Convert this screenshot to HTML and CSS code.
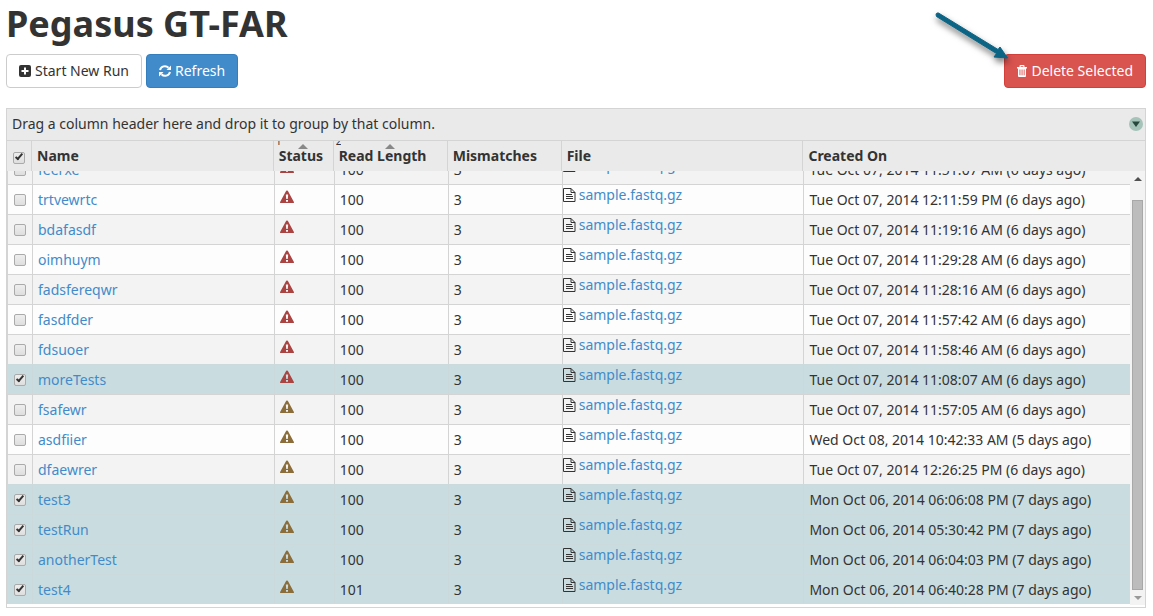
FILE: index.html
```
<!DOCTYPE html>
<html lang="en">
<head>
<meta charset="utf-8">
<title>Pegasus GT-FAR</title>
<link rel="stylesheet" href="styles.css">
</head>
<body>
<svg class="sprite" aria-hidden="true">
  <symbol id="warn" viewBox="0 0 14 14"><path fill="currentColor" fill-rule="evenodd" d="M6.200.8Q7 0 7.800.8L13.900 12q.3 1-.7 1H.8Q-.2 13 .1 12ZM5.900 4.500v1.500l.4 3h1.400l.4-3V4.500ZM6 10v1.800h2V10Z"/></symbol>
  <symbol id="doc" viewBox="0 0 13 14"><path fill="none" stroke="#333" d="M.5.5h7.500l4 4v9H.5ZM8 .5v4h4M3 6.500h6M3 8.500h7M3 10.500h7"/></symbol>
</svg>
<main class="page">
  <h1 class="title">Pegasus GT-FAR</h1>
  <div class="toolbar">
    <button class="btn btn-default" type="button"><svg class="btn-icon" viewBox="0 0 12 12" aria-hidden="true"><rect width="12" height="12" rx="2" fill="currentColor"/><path d="M6 2.500v7M2.500 6h7" stroke="#fff" stroke-width="2"/></svg>Start New Run</button>
    <button class="btn btn-primary" type="button"><svg class="btn-icon" viewBox="0 0 12 12" aria-hidden="true"><path d="M1 5A5 5 0 0 1 9.500 2.800M11 7A5 5 0 0 1 2.500 9.200" fill="none" stroke="currentColor" stroke-width="2"/><path d="M12 .5V5H7.500ZM0 11.500V7h4.500Z" fill="currentColor"/></svg>Refresh</button>
    <button class="btn btn-danger" type="button"><svg class="btn-icon trash" viewBox="0 0 10 12" aria-hidden="true"><path fill="currentColor" fill-rule="evenodd" d="M2.500 2V1Q2.500 0 3.500 0h3q1 0 1 1v1H10v1.500H9V11q0 1-1 1H2q-1 0-1-1V3.500H0V2ZM3.700 2h2.600V1.200H3.700ZM2.500 4.500v5.800h.9V4.500ZM4.600 4.500v5.800h.9V4.500ZM6.700 4.500v5.800h.9V4.500Z"/></svg>Delete Selected</button>
  </div>
  <section class="grid">
    <div class="group-bar"><span>Drag a column header here and drop it to group by that column.</span>
      <button class="menu" type="button" aria-label="Column menu"><svg viewBox="0 0 14 14"><circle cx="7" cy="7" r="7" fill="#a5c3b8"/><path d="M3 4.500h8L7 10Z" fill="#27483f"/></svg></button>
    </div>
    <div class="viewport">
      <table class="runs">
        <thead class="head"><tr class="row head-row">
          <th class="cell pick"><input class="check" type="checkbox" aria-label="Select all" checked></th>
          <th class="cell">Name</th>
          <th class="cell sorted"><span class="order">1</span>Status</th>
          <th class="cell sorted"><span class="order">2</span>Read Length</th>
          <th class="cell">Mismatches</th><th class="cell">File</th><th class="cell">Created On</th>
        </tr></thead>
        <tbody class="body">
          <tr class="row alt"><td class="cell pick"><input class="check" type="checkbox" aria-label="Select feerxe"></td><td class="cell"><a href="#">feerxe</a></td><td class="cell"><svg class="warn failed"><use href="#warn"/></svg></td><td class="cell">100</td><td class="cell">3</td><td class="cell file"><svg class="doc"><use href="#doc"/></svg><a href="#">sample.fastq.gz</a></td><td class="cell">Tue Oct 07, 2014 11:51:07 AM (6 days ago)</td></tr>
          <tr class="row"><td class="cell pick"><input class="check" type="checkbox" aria-label="Select trtvewrtc"></td><td class="cell"><a href="#">trtvewrtc</a></td><td class="cell"><svg class="warn failed"><use href="#warn"/></svg></td><td class="cell">100</td><td class="cell">3</td><td class="cell file"><svg class="doc"><use href="#doc"/></svg><a href="#">sample.fastq.gz</a></td><td class="cell">Tue Oct 07, 2014 12:11:59 PM (6 days ago)</td></tr>
          <tr class="row alt"><td class="cell pick"><input class="check" type="checkbox" aria-label="Select bdafasdf"></td><td class="cell"><a href="#">bdafasdf</a></td><td class="cell"><svg class="warn failed"><use href="#warn"/></svg></td><td class="cell">100</td><td class="cell">3</td><td class="cell file"><svg class="doc"><use href="#doc"/></svg><a href="#">sample.fastq.gz</a></td><td class="cell">Tue Oct 07, 2014 11:19:16 AM (6 days ago)</td></tr>
          <tr class="row"><td class="cell pick"><input class="check" type="checkbox" aria-label="Select oimhuym"></td><td class="cell"><a href="#">oimhuym</a></td><td class="cell"><svg class="warn failed"><use href="#warn"/></svg></td><td class="cell">100</td><td class="cell">3</td><td class="cell file"><svg class="doc"><use href="#doc"/></svg><a href="#">sample.fastq.gz</a></td><td class="cell">Tue Oct 07, 2014 11:29:28 AM (6 days ago)</td></tr>
          <tr class="row alt"><td class="cell pick"><input class="check" type="checkbox" aria-label="Select fadsfereqwr"></td><td class="cell"><a href="#">fadsfereqwr</a></td><td class="cell"><svg class="warn failed"><use href="#warn"/></svg></td><td class="cell">100</td><td class="cell">3</td><td class="cell file"><svg class="doc"><use href="#doc"/></svg><a href="#">sample.fastq.gz</a></td><td class="cell">Tue Oct 07, 2014 11:28:16 AM (6 days ago)</td></tr>
          <tr class="row"><td class="cell pick"><input class="check" type="checkbox" aria-label="Select fasdfder"></td><td class="cell"><a href="#">fasdfder</a></td><td class="cell"><svg class="warn failed"><use href="#warn"/></svg></td><td class="cell">100</td><td class="cell">3</td><td class="cell file"><svg class="doc"><use href="#doc"/></svg><a href="#">sample.fastq.gz</a></td><td class="cell">Tue Oct 07, 2014 11:57:42 AM (6 days ago)</td></tr>
          <tr class="row alt"><td class="cell pick"><input class="check" type="checkbox" aria-label="Select fdsuoer"></td><td class="cell"><a href="#">fdsuoer</a></td><td class="cell"><svg class="warn failed"><use href="#warn"/></svg></td><td class="cell">100</td><td class="cell">3</td><td class="cell file"><svg class="doc"><use href="#doc"/></svg><a href="#">sample.fastq.gz</a></td><td class="cell">Tue Oct 07, 2014 11:58:46 AM (6 days ago)</td></tr>
          <tr class="row selected"><td class="cell pick"><input class="check" type="checkbox" aria-label="Select moreTests" checked></td><td class="cell"><a href="#">moreTests</a></td><td class="cell"><svg class="warn failed"><use href="#warn"/></svg></td><td class="cell">100</td><td class="cell">3</td><td class="cell file"><svg class="doc"><use href="#doc"/></svg><a href="#">sample.fastq.gz</a></td><td class="cell">Tue Oct 07, 2014 11:08:07 AM (6 days ago)</td></tr>
          <tr class="row alt"><td class="cell pick"><input class="check" type="checkbox" aria-label="Select fsafewr"></td><td class="cell"><a href="#">fsafewr</a></td><td class="cell"><svg class="warn"><use href="#warn"/></svg></td><td class="cell">100</td><td class="cell">3</td><td class="cell file"><svg class="doc"><use href="#doc"/></svg><a href="#">sample.fastq.gz</a></td><td class="cell">Tue Oct 07, 2014 11:57:05 AM (6 days ago)</td></tr>
          <tr class="row"><td class="cell pick"><input class="check" type="checkbox" aria-label="Select asdfiier"></td><td class="cell"><a href="#">asdfiier</a></td><td class="cell"><svg class="warn"><use href="#warn"/></svg></td><td class="cell">100</td><td class="cell">3</td><td class="cell file"><svg class="doc"><use href="#doc"/></svg><a href="#">sample.fastq.gz</a></td><td class="cell">Wed Oct 08, 2014 10:42:33 AM (5 days ago)</td></tr>
          <tr class="row alt"><td class="cell pick"><input class="check" type="checkbox" aria-label="Select dfaewrer"></td><td class="cell"><a href="#">dfaewrer</a></td><td class="cell"><svg class="warn"><use href="#warn"/></svg></td><td class="cell">100</td><td class="cell">3</td><td class="cell file"><svg class="doc"><use href="#doc"/></svg><a href="#">sample.fastq.gz</a></td><td class="cell">Tue Oct 07, 2014 12:26:25 PM (6 days ago)</td></tr>
          <tr class="row selected"><td class="cell pick"><input class="check" type="checkbox" aria-label="Select test3" checked></td><td class="cell"><a href="#">test3</a></td><td class="cell"><svg class="warn"><use href="#warn"/></svg></td><td class="cell">100</td><td class="cell">3</td><td class="cell file"><svg class="doc"><use href="#doc"/></svg><a href="#">sample.fastq.gz</a></td><td class="cell">Mon Oct 06, 2014 06:06:08 PM (7 days ago)</td></tr>
          <tr class="row selected"><td class="cell pick"><input class="check" type="checkbox" aria-label="Select testRun" checked></td><td class="cell"><a href="#">testRun</a></td><td class="cell"><svg class="warn"><use href="#warn"/></svg></td><td class="cell">100</td><td class="cell">3</td><td class="cell file"><svg class="doc"><use href="#doc"/></svg><a href="#">sample.fastq.gz</a></td><td class="cell">Mon Oct 06, 2014 05:30:42 PM (7 days ago)</td></tr>
          <tr class="row selected"><td class="cell pick"><input class="check" type="checkbox" aria-label="Select anotherTest" checked></td><td class="cell"><a href="#">anotherTest</a></td><td class="cell"><svg class="warn"><use href="#warn"/></svg></td><td class="cell">100</td><td class="cell">3</td><td class="cell file"><svg class="doc"><use href="#doc"/></svg><a href="#">sample.fastq.gz</a></td><td class="cell">Mon Oct 06, 2014 06:04:03 PM (7 days ago)</td></tr>
          <tr class="row selected"><td class="cell pick"><input class="check" type="checkbox" aria-label="Select test4" checked></td><td class="cell"><a href="#">test4</a></td><td class="cell"><svg class="warn"><use href="#warn"/></svg></td><td class="cell">101</td><td class="cell">3</td><td class="cell file"><svg class="doc"><use href="#doc"/></svg><a href="#">sample.fastq.gz</a></td><td class="cell">Mon Oct 06, 2014 06:40:28 PM (7 days ago)</td></tr>
        </tbody>
      </table>
      <div class="scrollbar" aria-hidden="true">
        <svg class="step" viewBox="0 0 15 15"><path d="M4 10h8L8 6Z" fill="#505050"/></svg>
        <div class="thumb"></div>
        <svg class="step" viewBox="0 0 15 15"><path d="M4 6h8L8 10Z" fill="#999"/></svg>
      </div>
    </div>
  </section>
  <svg class="pointer" viewBox="0 0 80 60" aria-hidden="true"><path d="M6.500 5 66 41.500 68 39 75.500 50 62 49 64.500 45.500 4.500 8.500Q3 4.500 6.500 5Z" fill="#0b6484" stroke="#0b6484" stroke-linejoin="round"/></svg>
</main>
</body>
</html>
```
FILE: styles.css
```
* { box-sizing: border-box; }
body {
  margin: 0;
  background: #fff;
  color: #333;
  font: 14px/20px "Noto Sans", sans-serif;
}
a { color: #428bca; text-decoration: none; }
.sprite { display: none; }
.page { position: relative; padding: 4px 7px 8px 6px; }
.title { margin: 0 0 10px; font-size: 36px; line-height: 40px; font-weight: 700; }

.toolbar { display: flex; gap: 4px; margin-bottom: 20px; }
.btn {
  display: flex;
  align-items: center;
  gap: 4px;
  padding: 6px 12px;
  border: 1px solid #ccc;
  border-radius: 4px;
  background: #fff;
  color: #333;
  font: inherit;
}
.btn-primary { background: #428bca; border-color: #357ebd; color: #fff; }
.btn-danger { margin-left: auto; background: #d9534f; border-color: #d43f3a; color: #fff; }
.btn-icon { width: 12px; height: 12px; }
.trash { width: 10px; }

.grid { padding-bottom: 2px; border: 1px solid #d4d4d4; }
.group-bar {
  display: flex;
  align-items: center;
  justify-content: space-between;
  padding: 5px 2px 6px 5px;
  background: #eaeaea;
}
.menu { width: 14px; height: 14px; padding: 0; border: 0; background: none; }
.menu svg { display: block; }

.viewport { display: grid; grid-template-columns: 1fr 15px; }
.runs { display: contents; }
.head {
  display: block;
  grid-column: 1 / -1;
  padding-right: 16px;
  border-top: 1px solid #d4d4d4;
  background: #eaeaea;
}
.body { display: block; overflow: hidden; padding-bottom: 1px; }
.row {
  display: grid;
  grid-template-columns: 25px 242fr 60px 114px 114px 242fr 326fr;
}
.cell {
  display: flex;
  align-items: flex-start;
  padding: 5px;
  border-right: 1px solid #d4d4d4;
  text-align: left;
  white-space: nowrap;
}
.cell:last-child { border-right: 0; }
.pick { justify-content: center; padding: 9px 0 0; }
.head-row .pick { padding-top: 11px; }

.sorted { position: relative; }
.sorted::after {
  content: "";
  position: absolute;
  top: 3px;
  left: 50%;
  margin-left: -5px;
  border: 5px solid transparent;
  border-top: 0;
  border-bottom-color: #888;
}
.order {
  position: absolute;
  top: 0;
  left: 2px;
  height: 6px;
  overflow: hidden;
  font-size: 10px;
  font-weight: 400;
  line-height: 0;
}

.body .row { border-top: 1px solid #d4d4d4; border-left: 1px solid #d4d4d4; background: #fdfdfd; }
.body .row:first-child { margin-top: -17px; }
.body .cell { padding-bottom: 4px; }
.body .alt { background: #f3f3f3; }
.body .selected { background: #c9dde1; border-color: #cbdadd; }
.selected .cell { border-color: #cbd9dc; }
.body .file { gap: 3px; padding: 0; }
.doc { width: 13px; height: 14px; margin-top: 3px; }
.warn { width: 14px; height: 14px; color: #8a6d3b; }
.failed { color: #a94442; }

.check {
  appearance: none;
  width: 12px;
  height: 12px;
  margin: 0;
  border: 1px solid #aaa;
  border-radius: 2px;
  background: linear-gradient(#eee, #dedede);
}
.check:checked { position: relative; }
.check:checked::after {
  content: "";
  position: absolute;
  left: 3px;
  top: 0;
  width: 4px;
  height: 8px;
  border: solid #333;
  border-width: 0 2px 2px 0;
  transform: rotate(40deg);
}

.scrollbar { display: flex; flex-direction: column; align-items: center; background: #f3f3f3; }
.step { width: 15px; height: 15px; }
.thumb { flex: 1; width: 11px; margin-top: 14px; border: 1px solid #a8a8a8; background: #bcbcbc; }
.check:checked::after { box-sizing: content-box; left: 3px; top: -1px; width: 2px; height: 6px; }

.pointer {
  position: absolute;
  top: 8px;
  right: 141px;
  width: 80px;
  height: 60px;
  filter: drop-shadow(1px 4px 3px #0008);
}
```
